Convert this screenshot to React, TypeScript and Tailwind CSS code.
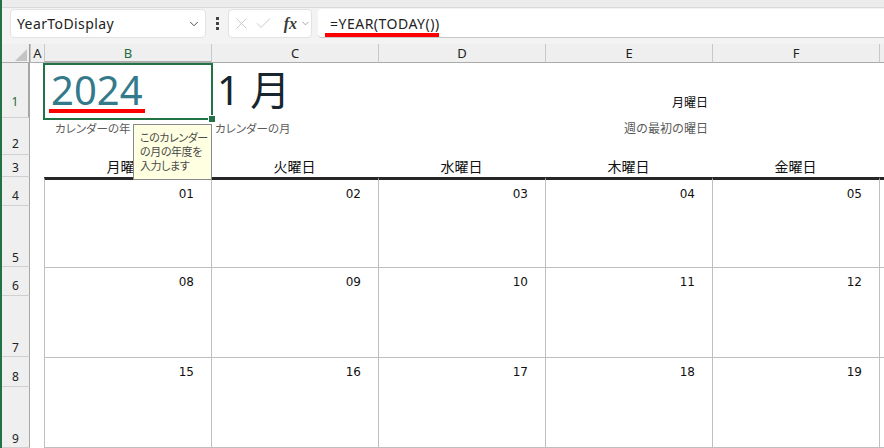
import { ChevronDown, X, Check } from "lucide-react";

const weeks = [
  ["01", "02", "03", "04", "05"],
  ["08", "09", "10", "11", "12"],
  ["15", "16", "17", "18", "19"],
];
const days = ["月曜日", "火曜日", "水曜日", "木曜日", "金曜日"];
const colStart = ["col-start-3", "col-start-4", "col-start-5", "col-start-6", "col-start-7"];
const weekRow = ["row-start-5", "row-start-7", "row-start-9"];

// sheet row numbers with their grid row + label padding
const rowHeads = [
  { n: 1, cls: "row-start-2 pb-[7px] bg-[#d2d2d2] border-r-2 border-r-[#217346] text-[#1e6b41]" },
  { n: 2, cls: "row-start-3 pb-[2px]" },
  { n: 3, cls: "row-start-4" },
  { n: 4, cls: "row-start-5 pb-px" },
  { n: 5, cls: "row-start-6" },
  { n: 6, cls: "row-start-7 pb-px" },
  { n: 7, cls: "row-start-8" },
  { n: 8, cls: "row-start-9 pb-px" },
  { n: 9, cls: "row-start-10" },
];

const colHeads = [
  { l: "A", cls: "col-start-2" },
  { l: "B", cls: "col-start-3 bg-[#d2d2d2] border-b-2 border-b-[#217346] text-[#1e6b41]" },
  { l: "C", cls: "col-start-4" },
  { l: "D", cls: "col-start-5" },
  { l: "E", cls: "col-start-6" },
  { l: "F", cls: "col-start-7" },
  { l: "", cls: "col-start-8" },
];

const App = () => {
  return (
    <div className="relative w-[884px] h-[448px] overflow-hidden bg-white border-l-2 border-[#217346] font-['Noto_Sans','Noto_Sans_CJK_JP',sans-serif] text-[#222]">
      {/* formula bar */}
      <div className="h-[8px] bg-[#ececec] border-b border-[#d9d9d9]" />
      <div className="h-[36px] bg-[#f3f3f3] flex items-start pt-px pl-[8px]">
        <div className="w-[196px] h-[29px] bg-white rounded-[4px] border border-[#e2e2e2] flex items-center justify-between pl-[6px] pr-[4px]">
          <span className="text-[14px] tracking-[0.4px]">YearToDisplay</span>
          <ChevronDown size={14} strokeWidth={1.6} className="text-[#444]" />
        </div>
        <div className="w-[22px] h-[29px] flex flex-col items-center justify-center gap-[2px]">
          <span className="w-[3px] h-[3px] bg-[#444]" />
          <span className="w-[3px] h-[3px] bg-[#444]" />
          <span className="w-[3px] h-[3px] bg-[#444]" />
        </div>
        <div className="w-[84px] h-[29px] bg-white rounded-[4px] border border-[#e2e2e2] flex items-center pl-[3px]">
          <X size={19} strokeWidth={1.1} className="text-[#c2c2c2]" />
          <Check size={19} strokeWidth={1.1} className="text-[#c2c2c2] ml-[3px]" />
          <span className="ml-[11px] font-['Liberation_Serif',serif] italic font-bold text-[16px] text-[#3a3a3a]">fx</span>
          <ChevronDown size={11} strokeWidth={1.6} className="text-[#888] ml-[3px]" />
        </div>
        <div className="relative ml-[6px] flex-1 h-[29px] bg-white rounded-l-[4px] border-b border-[#c9c9c9] flex items-center pl-[12px]">
          <span className="text-[14px] tracking-[0.5px]">=YEAR(TODAY())</span>
          <div className="absolute left-[7px] top-[24px] w-[114px] h-[4px] bg-[#ff0000]" />
        </div>
      </div>

      {/* sheet */}
      <div className="grid grid-cols-[28px_14px_167px_167px_167px_167px_167px_1fr] grid-rows-[19px_55px_37px_22px_29px_61px_29px_61px_30px_61px]">
        <div className="col-start-1 row-start-1 bg-[#efefef] border-r border-r-[#9b9b9b] border-b border-b-[#ababab] flex items-end justify-end pr-[2px] pb-[1px]">
          <svg width="12" height="12" viewBox="0 0 12 12">
            <polygon points="12,0 12,12 0,12" fill="#c4c4c4" />
          </svg>
        </div>
        {colHeads.map((c) => (
          <div
            key={c.cls}
            className={`row-start-1 bg-[#efefef] border-b border-b-[#ababab] border-l border-l-[#c8c8c8] flex items-center justify-center pt-[2px] text-[13px] ${c.cls}`}>
            {c.l}
          </div>
        ))}
        {rowHeads.map((r) => (
          <div
            key={r.n}
            className={`col-start-1 bg-[#efefef] border-r border-r-[#a6a6a6] border-b border-b-[#d0d0d0] flex items-end justify-center text-[12px] leading-4 ${r.cls}`}>
            {r.n}
          </div>
        ))}

        {/* row 1 */}
        <div className="relative col-start-3 row-start-2 pl-[7px] pt-[7px]">
          <span className="text-[40px] leading-[40px] text-[#337a8b]">2024</span>
          <div className="absolute left-[5px] top-[46px] w-[96px] h-[4px] bg-[#ff0000]" />
        </div>
        <div className="col-start-4 row-start-2 pl-[6px] pt-[7px] text-[40px] leading-[40px] text-[#17262e]">1 月</div>
        <div className="col-start-6 row-start-2 flex items-end justify-end pr-[4px] pb-[7px] text-[12px] leading-[16px] text-[#111]">月曜日</div>

        {/* row 2 */}
        <div className="col-start-3 row-start-3 pl-[11px] pt-[3px] text-[11.5px] leading-[16px] text-[#5a5a5a] [font-feature-settings:'palt']">カレンダーの年</div>
        <div className="col-start-4 row-start-3 pl-[4px] pt-[3px] text-[11.5px] leading-[16px] text-[#5a5a5a] [font-feature-settings:'palt']">カレンダーの月</div>
        <div className="col-start-6 row-start-3 flex justify-end pr-[4px] pt-[3px] text-[12px] leading-[16px] text-[#5a5a5a]">週の最初の曜日</div>

        {/* row 3 weekdays */}
        {days.map((d, i) => (
          <div key={d} className={`row-start-4 flex items-center justify-center pt-[2px] text-[14px] leading-5 text-[#111] ${colStart[i]}`}>
            {d}
          </div>
        ))}

        {/* calendar */}
        {weeks.map((w, wi) => (
          <>
            {w.map((n, i) => (
              <div
                key={n}
                className={`row-span-2 border-l border-l-[#bfbfbf] flex justify-end pr-[17px] pt-[7px] font-['DejaVu_Sans',sans-serif] text-[12px] leading-[14px] text-[#111] ${weekRow[wi]} ${colStart[i]} ${
                  wi === 0 ? "border-t-[3px] border-t-[#262626]" : "border-t border-t-[#bfbfbf]"
                } ${wi === 2 ? "border-b border-b-[#bfbfbf]" : ""}`}>
                {n}
              </div>
            ))}
            <div
              key={`g${wi}`}
              className={`col-start-8 row-span-2 border-l border-l-[#bfbfbf] ${weekRow[wi]} ${
                wi === 0 ? "border-t-[3px] border-t-[#262626]" : "border-t border-t-[#bfbfbf]"
              } ${wi === 2 ? "border-b border-b-[#bfbfbf]" : ""}`}
            />
          </>
        ))}
      </div>

      {/* selection of B1 */}
      <div className="absolute left-[41px] top-[63px] w-[170px] h-[57px] border-2 border-[#217346]" />
      <div className="absolute left-[207px] top-[116px] w-[6px] h-[6px] bg-[#217346] outline outline-1 outline-white" />

      {/* comment tooltip */}
      <div className="absolute left-[131px] top-[124px] w-[79px] h-[56px] bg-[#ffffe1] border border-[#8a8a8a] pl-[6px] pt-[6px] text-[11px] leading-[14px] tracking-[-0.4px] text-[#4a4a4a] [font-feature-settings:'palt'] whitespace-nowrap">
        <div>このカレンダー</div>
        <div>の月の年度を</div>
        <div>入力します</div>
      </div>
    </div>
  );
};

export default App;
